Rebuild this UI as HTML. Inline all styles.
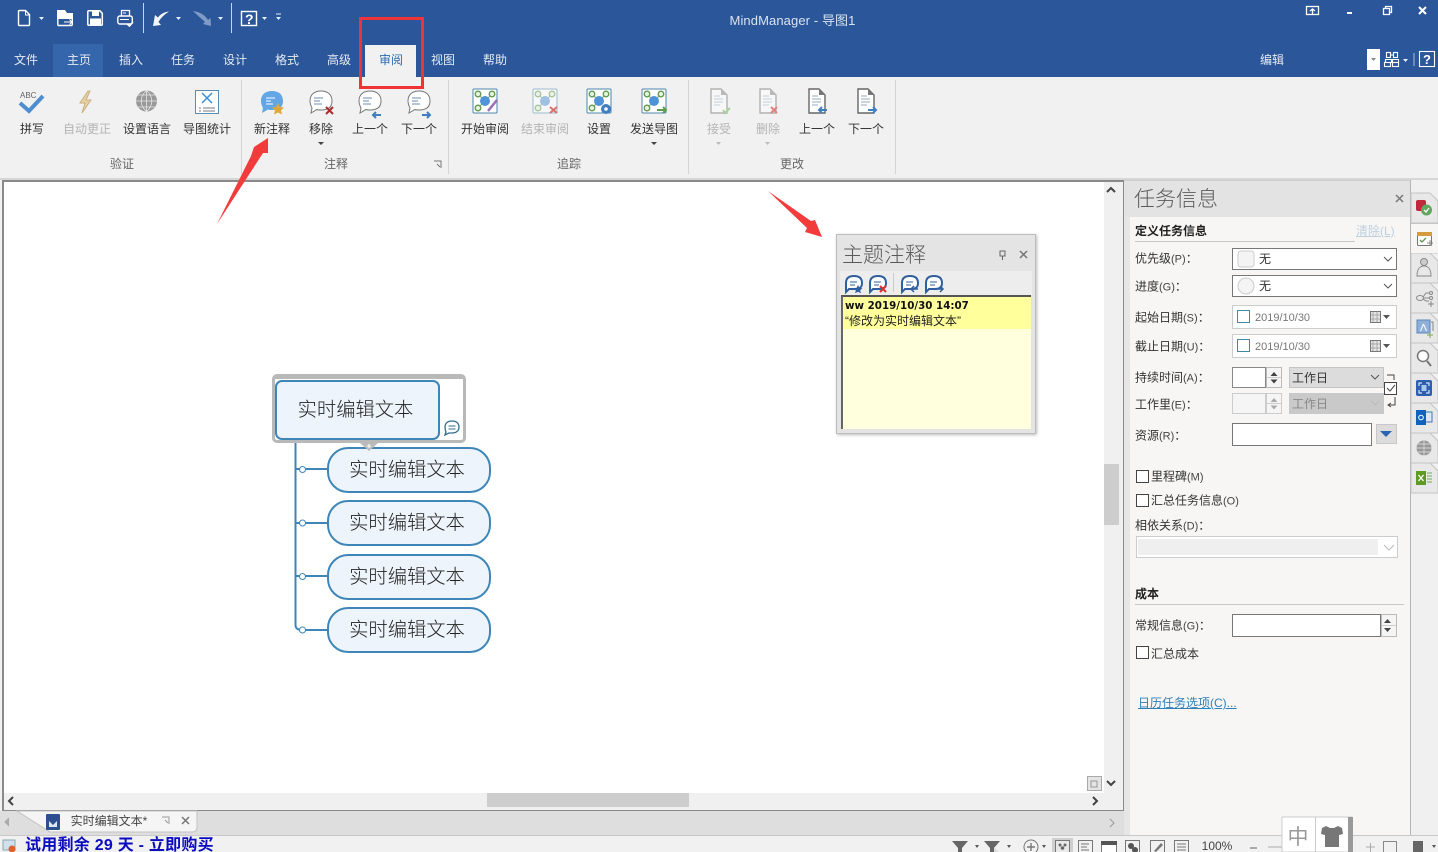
<!DOCTYPE html>
<html><head><meta charset="utf-8"><style>
html,body{margin:0;padding:0;width:1438px;height:852px;overflow:hidden;background:#f1f1f1}
body{position:relative;font-family:"Liberation Sans","Noto Sans CJK SC",sans-serif;font-size:12px;color:#333}
.b{position:absolute;box-sizing:border-box}
.t{position:absolute;white-space:nowrap;line-height:16px;transform:translate(-50%,-50%);z-index:2}
.l{position:absolute;white-space:nowrap;line-height:16px;transform:translateY(-50%);z-index:2}
.tab{color:#e4eaf4}.dis{color:#b4b4b4}.grp{color:#666}
.topic{position:absolute;box-sizing:border-box;background:#eef4fb;border:2px solid #3f86b8;left:327px;width:164px;height:46px;border-radius:21px;font-size:19.3px;font-weight:300;line-height:44px;text-align:center;color:#222;padding-right:4px}
.lab{color:#333}.lab small{font-size:11px;color:#444}
svg{position:absolute;left:0;top:0}
</style></head><body>
<div class="b" style="left:0;top:0;width:1438px;height:77px;background:#2b579a"></div>
<div class="b" style="left:53px;top:44px;width:50px;height:33px;background:#3565ab"></div>
<div class="b" style="left:365px;top:45px;width:51px;height:32px;background:#f1f1f1"></div>
<div class="b" style="left:1367px;top:49px;width:13px;height:21px;background:#fff"></div>
<div class="t" style="left:792.500px;top:21px;color:#d9e2f0;font-size:13px;letter-spacing:.1px">MindManager - 导图1</div>
<div class="t tab" style="left:26px;top:60px">文件</div><div class="t tab" style="left:79px;top:60px">主页</div><div class="t tab" style="left:131px;top:60px">插入</div><div class="t tab" style="left:183px;top:60px">任务</div><div class="t tab" style="left:235px;top:60px">设计</div><div class="t tab" style="left:287px;top:60px">格式</div><div class="t tab" style="left:339px;top:60px">高级</div><div class="t" style="left:391px;top:60px;color:#2b6cb0">审阅</div><div class="t tab" style="left:443px;top:60px">视图</div><div class="t tab" style="left:495px;top:60px">帮助</div><div class="t tab" style="left:1272px;top:60px">编辑</div>

<div class="t" style="left:32px;top:128.500px">拼写</div><div class="t dis" style="left:87px;top:128.500px">自动更正</div><div class="t" style="left:147px;top:128.500px">设置语言</div><div class="t" style="left:207px;top:128.500px">导图统计</div><div class="t" style="left:272px;top:128.500px">新注释</div><div class="t" style="left:321px;top:128.500px">移除</div><div class="t" style="left:370px;top:128.500px">上一个</div><div class="t" style="left:419px;top:128.500px">下一个</div><div class="t" style="left:485px;top:128.500px">开始审阅</div><div class="t dis" style="left:545px;top:128.500px">结束审阅</div><div class="t" style="left:599px;top:128.500px">设置</div><div class="t" style="left:654px;top:128.500px">发送导图</div><div class="t dis" style="left:719px;top:128.500px">接受</div><div class="t dis" style="left:768px;top:128.500px">删除</div><div class="t" style="left:817px;top:128.500px">上一个</div><div class="t" style="left:866px;top:128.500px">下一个</div>
<div class="t grp" style="left:122px;top:164px">验证</div><div class="t grp" style="left:336px;top:164px">注释</div><div class="t grp" style="left:569px;top:164px">追踪</div><div class="t grp" style="left:792px;top:164px">更改</div>

<div class="b" style="left:0;top:178px;width:1438px;height:2px;background:#d6d6d6"></div>
<div class="b" style="left:2px;top:180px;width:1122px;height:631px;background:#fff;border:2px solid #8a8a8a;border-width:2px 1px 1px 2px"></div>
<div class="b" style="left:1104px;top:182px;width:19px;height:628px;background:#f0f0f0"></div>
<div class="b" style="left:4px;top:793px;width:1119px;height:17px;background:#f0f0f0"></div>
<div class="b" style="left:1104px;top:464px;width:15px;height:61px;background:#cdcdcd"></div>
<div class="b" style="left:487px;top:793px;width:202px;height:14px;background:#cdcdcd"></div>
<div class="b" style="left:0;top:811px;width:1124px;height:24px;background:#dedede"></div>
<div class="b" style="left:1124px;top:180px;width:6px;height:655px;background:#e6e6e6"></div>
<div class="b" style="left:1130px;top:180px;width:280px;height:655px;background:#f7f6f5"></div>
<div class="b" style="left:1124px;top:180px;width:286px;height:37px;background:#e3e3e3;border-top:1px solid #ccc"></div>
<div class="b" style="left:1410px;top:180px;width:28px;height:655px;background:#f0f0f0;border-left:1px solid #b5b5b5"></div>
<div class="b" style="left:0;top:835px;width:1438px;height:17px;background:#f1f1f1;border-top:1px solid #c8c8c8"></div>

<div class="l" style="left:1134px;top:200px;font-size:21px;line-height:26px;color:#5a5a5a;font-weight:300">任务信息</div>
<div class="l" style="left:1135px;top:231px;font-weight:bold;color:#222">定义任务信息</div>
<div class="l" style="left:1356px;top:231px;color:#bfd0dd;text-decoration:underline">清除(L)</div>
<div class="b" style="left:1135px;top:241px;width:220px;height:1px;background:#c8c8c8"></div>
<div class="l lab" style="left:1135px;top:259px">优先级<small>(P)</small>：</div>
<div class="l lab" style="left:1135px;top:287px">进度<small>(G)</small>：</div>
<div class="l lab" style="left:1135px;top:318px">起始日期<small>(S)</small>：</div>
<div class="l lab" style="left:1135px;top:347px">截止日期<small>(U)</small>：</div>
<div class="l lab" style="left:1135px;top:378px">持续时间<small>(A)</small>：</div>
<div class="l lab" style="left:1135px;top:405px">工作里<small>(E)</small>：</div>
<div class="l lab" style="left:1135px;top:436px">资源<small>(R)</small>：</div>
<div class="l lab" style="left:1151px;top:477px">里程碑<small>(M)</small></div>
<div class="l lab" style="left:1151px;top:501px">汇总任务信息<small>(O)</small></div>
<div class="l lab" style="left:1135px;top:526px">相依关系<small>(D)</small>：</div>
<div class="l" style="left:1135px;top:594px;font-weight:bold;color:#222">成本</div>
<div class="b" style="left:1135px;top:604px;width:269px;height:1px;background:#c8c8c8"></div>
<div class="l lab" style="left:1135px;top:626px">常规信息<small>(G)</small>：</div>
<div class="l lab" style="left:1151px;top:654px">汇总成本</div>
<div class="l" style="left:1138px;top:703px;color:#2f80b8;text-decoration:underline">日历任务选项(C)...</div>

<div class="b" style="left:1232px;top:248px;width:165px;height:22px;background:#fff;border:1px solid #777"></div>
<div class="b" style="left:1232px;top:275px;width:165px;height:22px;background:#fff;border:1px solid #777"></div>
<div class="l" style="left:1259px;top:259px">无</div><div class="l" style="left:1259px;top:286px">无</div>
<div class="b" style="left:1232px;top:305px;width:165px;height:24px;background:#fff;border:1px solid #ccc"></div>
<div class="b" style="left:1232px;top:334px;width:165px;height:24px;background:#fff;border:1px solid #ccc"></div>
<div class="l" style="left:1255px;top:318px;color:#777;font-size:11px">2019/10/30</div>
<div class="l" style="left:1255px;top:347px;color:#777;font-size:11px">2019/10/30</div>
<div class="b" style="left:1232px;top:367px;width:34px;height:21px;background:#fff;border:1px solid #888"></div>
<div class="b" style="left:1266px;top:367px;width:16px;height:21px;background:#f5f5f5;border:1px solid #bbb"></div>
<div class="b" style="left:1289px;top:367px;width:95px;height:21px;background:#dcdcdc;border:1px solid #c4c4c4"></div>
<div class="l" style="left:1292px;top:378px">工作日</div>
<div class="b" style="left:1232px;top:393px;width:34px;height:21px;background:#f5f5f5;border:1px solid #ccc"></div>
<div class="b" style="left:1266px;top:393px;width:16px;height:21px;background:#f5f5f5;border:1px solid #ccc"></div>
<div class="b" style="left:1289px;top:393px;width:95px;height:21px;background:#c9c9c9"></div>
<div class="l" style="left:1292px;top:404px;color:#888">工作日</div>
<div class="b" style="left:1232px;top:423px;width:140px;height:23px;background:#fff;border:1px solid #777"></div>
<div class="b" style="left:1376px;top:424px;width:21px;height:20px;background:#dcdcdc;border:1px solid #c8c8c8"></div>
<div class="b" style="left:1136px;top:470px;width:13px;height:13px;background:#fff;border:1px solid #444"></div>
<div class="b" style="left:1136px;top:494px;width:13px;height:13px;background:#fff;border:1px solid #444"></div>
<div class="b" style="left:1136px;top:536px;width:262px;height:22px;background:#fff;border:1px solid #ccc"></div>
<div class="b" style="left:1138px;top:539px;width:240px;height:16px;background:#efefef"></div>
<div class="b" style="left:1232px;top:614px;width:149px;height:23px;background:#fff;border:1px solid #777"></div>
<div class="b" style="left:1381px;top:614px;width:16px;height:23px;background:#f5f5f5;border:1px solid #bbb"></div>
<div class="b" style="left:1136px;top:646px;width:13px;height:13px;background:#fff;border:1px solid #444"></div>

<!-- mind map -->
<div class="b" style="left:272px;top:374px;width:194px;height:69px;background:#fff;border:3px solid #b9b9b9;border-top-width:5px;border-radius:5px"></div>
<div class="b" style="left:275px;top:380px;width:165px;height:60px;background:#eef4fb;border:2px solid #3f86b8;border-radius:7px;font-size:19.3px;font-weight:300;line-height:58px;text-align:center;color:#222;padding-right:4px">实时编辑文本</div>
<div class="topic" style="top:447px">实时编辑文本</div>
<div class="topic" style="top:500px">实时编辑文本</div>
<div class="topic" style="top:554px">实时编辑文本</div>
<div class="topic" style="top:607px">实时编辑文本</div>

<!-- note panel -->
<div class="b" style="left:836px;top:234px;width:200px;height:200px;background:#e4e4e4;border:1px solid #bdbdbd;box-shadow:1px 1px 3px #bbb"></div>
<div class="b" style="left:840px;top:271px;width:192px;height:24px;background:#ededed"></div>
<div class="l" style="left:842px;top:256px;font-size:21px;line-height:26px;color:#5a5a5a;font-weight:300">主题注释</div>
<div class="b" style="left:841px;top:295px;width:190px;height:134px;background:#ffffdd;border-top:2px solid #555;border-left:2px solid #666"></div>
<div class="b" style="left:843px;top:297px;width:188px;height:32px;background:#ffff9c"></div>
<div class="l" style="left:845px;top:305.500px;font-family:'DejaVu Sans',sans-serif;font-weight:bold;font-size:10.3px;color:#111">ww 2019/10/30 14:07</div>
<div class="l" style="left:845px;top:320.500px;color:#222">“修改为实时编辑文本”</div>

<!-- tab bar -->
<div class="t" style="left:109px;top:821px;color:#444">实时编辑文本*</div>
<div class="l" style="left:25px;top:846px;font-size:16px;font-weight:bold;color:#0b0bbf;letter-spacing:.25px">试用剩余 29 天 - 立即购买</div>
<div class="t" style="left:1217px;top:846px;color:#444">100%</div>

<svg width="1438" height="852" viewBox="0 0 1438 852" fill="none">
<defs>
<g id="bub"><path d="M-11 -1c0-7 5-10 11-10s11 3 11 10-5 9-11 9c-1 0-3 0-4-.5L-10 11l1-5c-1-2-2-4-2-7z"/></g>
<g id="lines"><path d="M-6 -4h9M-6 -1h6M-6 2h8" stroke="#6b8fae"/></g>
<g id="rev"><rect x="-12" y="-12" width="24" height="24" rx="1" fill="#fff" stroke="#4b86ad"/><path d="M-7 -7l7 7M7 -7l-7 7M-7 7l7-7" stroke="#7ba668"/><circle cx="-7" cy="-7" r="2.800" fill="#e6f1df" stroke="#5f9a4c" stroke-width="1.300"/><circle cx="7" cy="-7" r="2.800" fill="#e6f1df" stroke="#5f9a4c" stroke-width="1.300"/><circle cx="-7" cy="7" r="2.800" fill="#e6f1df" stroke="#5f9a4c" stroke-width="1.300"/><circle cx="0" cy="0" r="5" fill="#4f93d8"/></g>
<g id="doc"><path d="M-8 -12h10l6 6v18H-8z" fill="#fff" stroke="#666" stroke-width="1.4"/><path d="M2 -12l6 6H2z" fill="#777"/><path d="M-5 -5h6M-5 -2h9M-5 1h9M-5 4h6" stroke="#9ab"/></g>
<g id="mb"><path d="M-8 0c0-5 3-7 8-7s8 2 8 7-3 6-8 6h-5l-3 3z" fill="#fff" stroke="#2f5f9f" stroke-width="2"/><path d="M-4 -1h7M-4 2h5" stroke="#2f5f9f"/></g>
</defs>
<!-- quick access -->
<path d="M18.500 11.500a1 1 0 0 1 1-1h6l4 4v10a1 1 0 0 1-1 1h-9a1 1 0 0 1-1-1z" stroke="#fff" stroke-width="1.400"/><path d="M25.500 11v4h4" stroke="#fff"/>
<path d="M57 10h8l2 3h6v6H57z" fill="#fff"/><rect x="57.800" y="18" width="14.500" height="7.500" rx="1" stroke="#fff" stroke-width="1.400"/><path d="M64 22h8M69.500 19.500l2.500 2.500-2.500 2.500" stroke="#fff"/>
<path d="M87.800 11.800a1 1 0 0 1 1-1h11l2.500 2.500v11a1 1 0 0 1-1 1h-12.500a1 1 0 0 1-1-1z" stroke="#fff" stroke-width="1.500"/><rect x="92" y="11" width="7" height="5" fill="#fff"/><rect x="90" y="18.500" width="11" height="6.500" fill="#fff"/>
<path d="M121.500 16v-5.500h8v5.500" stroke="#fff" stroke-width="1.300"/><rect x="117.800" y="16" width="14.500" height="8" rx="2" stroke="#fff" stroke-width="1.400"/><path d="M120 19.500h9M123 13h3" stroke="#fff"/><path d="M127 24l2.500 2 3.500-4" stroke="#fff" stroke-width="1.600"/>
<path d="M169 11.500c-5 .5-8.500 2.500-11 6l-3-2.500-2 11 8-1-2.500-3c2-3.500 5-7 10.500-10.500z" fill="#f2f5fa"/>
<path d="M193 11c7 1 12 4 15 9l2.500-2 .5 8-8-2 2-2c-3-3-7-6-12-11z" fill="#7f9cc6"/>
<rect x="241.500" y="11.500" width="15" height="14" stroke="#fff" stroke-width="1.400"/>
<path d="M39 17h5l-2.500 3zM176 17h5l-2.500 3zM218 17h5l-2.500 3zM262 17h5l-2.500 3zM276 17h5l-2.500 3zM1403 59h5l-2.500 3z" fill="#e8eef6"/>
<path d="M276 14h5" stroke="#e8eef6"/>
<path d="M143.500 3v30M231.500 3v30" stroke="#c9d5e6"/>
<text x="245" y="24" font-family="Liberation Sans" font-weight="bold" font-size="14" fill="#fff">?</text>
<!-- window controls -->
<g stroke="#fff" stroke-width="1.300"><rect x="1306.500" y="6.500" width="12" height="8"/><path d="M1312.500 14V9M1310 11l2.500-2 2.500 2"/><path d="M1347 13h5" stroke-width="2"/><path d="M1383.500 8.500h6v6h-6zM1385.500 8.500v-2h6v6h-2"/><path d="M1419 7l7 7M1426 7l-7 7" stroke-width="2"/></g>
<g stroke="#fff" stroke-width="1.100"><rect x="1386.500" y="52.500" width="4" height="5"/><rect x="1393.500" y="52.500" width="4" height="5"/><path d="M1390.500 55h3M1385.500 59.500h6v3h-6zM1392.500 59.500h6v3h-6z"/><rect x="1384.500" y="62.500" width="6" height="4"/><rect x="1392.500" y="62.500" width="6" height="4"/><rect x="1419.500" y="51.500" width="15" height="15"/><path d="M1414 53v13" stroke="#9fb4d3"/></g>
<text x="1423" y="64" font-family="Liberation Sans" font-weight="bold" font-size="13" fill="#fff">?</text>
<path d="M1371 58h5l-2.500 3z" fill="#888"/>
<!-- red rect -->
<rect x="360.500" y="18.500" width="62" height="69" stroke="#ee3434" stroke-width="3"/>
<!-- ribbon separators -->
<path d="M241.500 80v94M448.500 80v94M688.500 80v94M895.500 80v94" stroke="#d4d4d4"/>
<path d="M434 161h7v7M437 164l3 3" stroke="#777"/>
<!-- ribbon icons -->
<path d="M20 103l9 8 14-15" stroke="#4d8ed1" stroke-width="4"/>
<text x="20" y="98" font-family="Liberation Sans" font-size="8" fill="#666">ABC</text>
<path d="M88 91l-8 12h5l-3 10 9-13h-5l4-9z" fill="#e8d2a0" stroke="#c8b080"/>
<circle cx="146.500" cy="101" r="10.500" fill="#999"/><path d="M136 101h21M146.500 90.500v21M138 95h17M138 107h17M146.500 90.500c-7 6-7 15 0 21M146.500 90.500c7 6 7 15 0 21" stroke="#e6e6e6" stroke-width=".8"/>
<rect x="195.500" y="90.500" width="23" height="23" fill="#fff" stroke="#5c8db0"/><path d="M202 93l10 10M212 93l-10 10" stroke="#3b8fd0" stroke-width="1.500"/><path d="M199 108h2M203 108h12M199 111h2M203 111h12" stroke="#778"/>
<use href="#bub" x="272" y="102" fill="#63a6e6"/><path d="M266 98h9M266 101h5M266 104h7" stroke="#fff"/><path d="M278 103l2 4 4 .5-3 3 1 4-4-2-4 2 1-4-3-3 4-.5z" fill="#e0a838"/>
<use href="#bub" x="321" y="102" fill="#fff" stroke="#777"/><use href="#lines" x="320" y="102"/><path d="M326 107l7 7M333 107l-7 7" stroke="#b02a2a" stroke-width="2"/>
<use href="#bub" x="370" y="102" fill="#fff" stroke="#777"/><use href="#lines" x="369" y="102"/><path d="M381 115h-8M376 112l-3 3 3 3" stroke="#3f7fc0" stroke-width="2"/>
<use href="#bub" x="419" y="102" fill="#fff" stroke="#777"/><use href="#lines" x="418" y="102"/><path d="M422 115h8M427 112l3 3-3 3" stroke="#3f7fc0" stroke-width="2"/>
<path d="M318 142h6l-3 3zM651 142h6l-3 3z" fill="#444"/><path d="M716 142h5l-2.500 3zM765 142h5l-2.500 3z" fill="#bbb"/>
<use href="#rev" x="485" y="101"/><path d="M488 111l9-11" stroke="#9a6fb0" stroke-width="2.500"/>
<g opacity=".5"><use href="#rev" x="545" y="101"/></g><path d="M550 107l7 6M557 107l-7 6" stroke="#d9706a" stroke-width="2"/>
<use href="#rev" x="599" y="101"/><circle cx="606" cy="109" r="5" fill="#3f7fc0"/><circle cx="606" cy="109" r="1.800" fill="#fff"/>
<use href="#rev" x="654" y="101"/><path d="M657 110h9M663 107l3 3-3 3" stroke="#5f9d50" stroke-width="2"/>
<g opacity=".45"><use href="#doc" x="719" y="101"/><use href="#doc" x="768" y="101"/></g>
<path d="M723 110l2 3 5-5" stroke="#a9d09a" stroke-width="2"/><path d="M771 107l6 6M777 107l-6 6" stroke="#e0827e" stroke-width="2"/>
<use href="#doc" x="817" y="101"/><path d="M827 110h-8M822 107l-3 3 3 3" stroke="#3f7fc0" stroke-width="2"/>
<use href="#doc" x="866" y="101"/><path d="M868 110h8M873 107l3 3-3 3" stroke="#3f7fc0" stroke-width="2"/>
<!-- arrows -->
<path d="M217 224L251 156 254 147 268 138 268 153 263 153z" fill="#f23c3c"/>
<path d="M768 191L811 221 815 220 822 237 805 232 807 228z" fill="#f23c3c"/>
<!-- mind map lines -->
<path d="M295.500 443V625q0 5 7 5H327M295 469h32M295 523h32M295 576h32" stroke="#3f86b8" stroke-width="2"/>
<g fill="#fff" stroke="#3f86b8"><circle cx="302.500" cy="469.500" r="3"/><circle cx="302.500" cy="523" r="3"/><circle cx="302.500" cy="576.500" r="3"/><circle cx="302.500" cy="630" r="3"/></g>
<path d="M360 443h18l-9 8z" fill="#bbb"/><path d="M367 446h4M369 444v4" stroke="#fff"/>
<path d="M445 427c0-4 3-6 7-6s7 2 7 6-3 6-7 6h-3l-4 2 1-3c-1-2-1-3-1-5z" fill="#fff" stroke="#2f6f8f" stroke-width="1.300"/><path d="M448.500 426h7M448.500 429h7" stroke="#2f6f8f"/>
<!-- scroll arrows -->
<path d="M1107 192l4-4 4 4M1107 781l4 4 4-4M13 797l-4 4 4 4M1093 797l4 4-4 4" stroke="#444" stroke-width="2"/>
<rect x="1087.500" y="776.500" width="14" height="14" fill="#e4e4e4" stroke="#aaa"/><path d="M1091 781h6v6h-6z" stroke="#999"/>
<!-- note toolbar -->
<use href="#mb" x="854" y="283"/><path d="M858 285l1.500 3 3 .3-2.300 2 .7 3-2.900-1.600-2.900 1.600.7-3-2.300-2 3-.3z" fill="#2f5f9f"/>
<use href="#mb" x="878" y="283"/><path d="M880 286l6 6M886 286l-6 6" stroke="#d63232" stroke-width="2"/>
<path d="M893.500 273v19" stroke="#ccc"/>
<use href="#mb" x="910" y="283"/><path d="M918 289h-6M914 286l-3 3 3 3" stroke="#2f5f9f" stroke-width="1.500"/>
<use href="#mb" x="934" y="283"/><path d="M936 289h6M940 286l3 3-3 3" stroke="#2f5f9f" stroke-width="1.500"/>
<path d="M1000 251h5v5h-5zM999.500 256h6M1002.500 256v4" stroke="#666"/>
<path d="M1020 251l7 7M1027 251l-7 7" stroke="#777" stroke-width="1.500"/>
<path d="M1396 195l7 7M1403 195l-7 7" stroke="#777" stroke-width="1.500"/>
<!-- right panel details -->
<rect x="1238" y="251" width="16" height="16" rx="3" fill="#f4f4f4" stroke="#ccc"/>
<circle cx="1246" cy="286" r="8" fill="#f4f4f4" stroke="#ccc"/>
<path d="M1384 257l4 4 4-4M1384 284l4 4 4-4M1371 375l4 4 4-4" stroke="#555"/>
<path d="M1371 401l4 4 4-4M1384 545l5 5 5-5" stroke="#bbb"/>
<rect x="1237.500" y="310.500" width="12" height="12" stroke="#3d8ba5"/><rect x="1237.500" y="339.500" width="12" height="12" stroke="#3d8ba5"/>
<g fill="#e4e4e4" stroke="#777"><rect x="1370.500" y="311.500" width="10" height="11"/><rect x="1370.500" y="340.500" width="10" height="11"/></g>
<path d="M1373 312v10M1377 312v10M1371 315h9M1371 319h9M1373 341v10M1377 341v10M1371 344h9M1371 348h9" stroke="#aaa"/>
<path d="M1383 315h7l-3.500 4zM1383 344h7l-3.500 4z" fill="#555"/>
<path d="M1267 377.500h14M1267 403.500h14M1382 625.500h14" stroke="#ccc"/>
<path d="M1270.500 376h7l-3.500-4zM1270.500 379.500h7l-3.500 4z" fill="#444"/><path d="M1270.500 402h7l-3.500-4zM1270.500 405.500h7l-3.500 4z" fill="#aaa"/>
<path d="M1384 623h7l-3.500-4zM1384 628h7l-3.500 4z" fill="#444"/>
<path d="M1380 431h12l-6 6z" fill="#2b64b0"/>
<path d="M1387 375h7v5M1395 397v8h-6M1391 403l-3 2 3 2" stroke="#444"/>
<rect x="1384.500" y="382.500" width="12" height="12" fill="#fff" stroke="#444"/><path d="M1387 388l3 3 5-6" stroke="#444"/>
<!-- right rail tabs -->
<path d="M1411 224h27v-1M1411 253h27" stroke="#c4c4c4"/>
<g fill="#e8e8e8" stroke="#c4c4c4"><path d="M1411 193h19l8 8v22h-27zM1411 253h19l8 8v22h-27zM1411 283h19l8 8v22h-27zM1411 313h19l8 8v22h-27zM1411 343h19l8 8v22h-27zM1411 373h19l8 8v22h-27zM1411 403h19l8 8v22h-27zM1411 433h19l8 8v22h-27zM1411 463h19l8 8v22h-27z"/></g>
<path d="M1411 224h27v29h-27z" fill="#f7f6f5"/>
<rect x="1416" y="200" width="10" height="11" rx="2" fill="#c0283c"/><circle cx="1426.500" cy="210" r="5.500" fill="#62a55c"/><path d="M1424 210l2 2 3-4" stroke="#fff" stroke-width="1.300"/>
<rect x="1417.500" y="232.500" width="14" height="13" rx="1" fill="#fff" stroke="#777"/><path d="M1417 232h15v4h-15z" fill="#d49b3f"/><path d="M1420 240l2 2 4-4" stroke="#5a9a50" stroke-width="1.300"/><path d="M1427 243h6M1430 240v6" stroke="#888"/>
<circle cx="1424" cy="262" r="3.500" fill="#ccc" stroke="#888"/><path d="M1417 276c0-7 3-10 7-10s7 3 7 10z" stroke="#888"/>
<ellipse cx="1420" cy="298" rx="3.500" ry="2.500" stroke="#888"/><path d="M1423 297l3-4h4M1423.500 298h6M1423 299l3 2h3" stroke="#888"/><circle cx="1431" cy="293" r="1.500" stroke="#888"/><circle cx="1431" cy="298" r="1.500" stroke="#888"/><path d="M1428 304h6M1431 301v6" stroke="#888"/>
<rect x="1417" y="320" width="13" height="13" fill="#8fb0d8" stroke="#5f86b8"/><path d="M1431 322h2v9" stroke="#888"/><path d="M1423.500 324l-3 7M1423.500 324l3 7" stroke="#fff"/><path d="M1427 335h6M1430 332v6" stroke="#7aa85a"/>
<circle cx="1423" cy="356" r="5.500" fill="#fff" stroke="#777" stroke-width="1.500"/><path d="M1427 361l4 5" stroke="#777" stroke-width="2"/>
<rect x="1416" y="380" width="16" height="16" rx="2" fill="#2c5fb0"/><path d="M1419 386v-3h3M1426 383h3v3M1429 390v3h-3M1422 393h-3v-3" stroke="#fff"/><rect x="1421.500" y="385" width="5" height="6" fill="#a8c8ea"/>
<rect x="1421" y="412" width="11" height="10" fill="#dce8f6" stroke="#3a78c0"/><rect x="1416" y="410" width="10" height="15" fill="#0f63bd"/><circle cx="1421" cy="417.500" r="2.300" stroke="#fff"/>
<circle cx="1424" cy="448" r="7.500" fill="#999"/><path d="M1416.500 448h15M1424 440.500v15M1418 444h12M1418 452h12" stroke="#e6e6e6" stroke-width=".7"/>
<rect x="1416" y="471" width="10" height="14" fill="#5f9b22"/><path d="M1427 473h5M1427 476h5M1427 479h5M1427 482h5" stroke="#7ca85a"/><path d="M1418.500 475l5 6M1423.500 475l-5 6" stroke="#fff" stroke-width="1.300"/>
<!-- tab bar -->
<path d="M17 811h180v16q0 5-5 5H50z" fill="#f5f5f5" stroke="#c2c2c2"/>
<path d="M9 818l-4 4 4 4" stroke="#aaa" fill="#aaa"/>
<path d="M1110 819l4 4-4 4" stroke="#999"/>
<rect x="46" y="814" width="14" height="16" rx="1" fill="#2c4f90"/><path d="M49 827v-6l4 4 4-4v6" fill="#dce6f4"/>
<path d="M162 817h7v7M165 820l3 3" stroke="#999"/><path d="M182 817l7 7M189 817l-7 7" stroke="#777" stroke-width="1.500"/>
<!-- status -->
<rect x="3" y="840" width="12" height="10" fill="#cfe0ef" stroke="#8aa"/><circle cx="12" cy="849" r="3.500" fill="#e06030"/>
<rect x="1052" y="838" width="21" height="14" fill="#cfcfcf"/>
<g fill="#666"><path d="M952 841h16l-6 7v4h-4v-4z"/><path d="M984 841h16l-6 7v4h-4v-4z"/></g>
<path d="M994 847l5 5h-5z" fill="#ddd"/>
<g stroke="#777"><circle cx="1031" cy="847" r="7"/><path d="M1027 847h8M1031 843v8" stroke-width="1.400"/><rect x="1055.500" y="840.500" width="14" height="12" fill="#e8e8e8"/><rect x="1078.500" y="840.500" width="14" height="12"/><path d="M1081 844h8M1081 847h6M1081 850h8"/><rect x="1101.500" y="841.500" width="15" height="11" fill="#fff"/><rect x="1125.500" y="840.500" width="14" height="12"/><rect x="1150.500" y="840.500" width="14" height="12"/><rect x="1174.500" y="840.500" width="14" height="12"/><path d="M1177 844h9M1177 847h9M1177 850h9"/><path d="M1250 848h7" stroke-width="2" stroke="#aaa"/><path d="M1268 847h14M1366 847h9M1370.500 843v9" stroke="#aaa"/><rect x="1383.500" y="841.500" width="13" height="11" stroke="#888"/></g>
<rect x="1101" y="841" width="16" height="4" fill="#555"/><circle cx="1060" cy="845" r="1.500" fill="#666"/><circle cx="1065" cy="845" r="1.500" fill="#666"/><circle cx="1062.500" cy="848" r="1.800" fill="#666"/>
<circle cx="1131" cy="846" r="3" fill="#555"/><circle cx="1135" cy="850" r="3" fill="#555"/><path d="M1154 851l7-8 2 2-7 7z" fill="#777"/>
<rect x="1413" y="841" width="10" height="11" fill="#666"/>
<path d="M975 845h4l-2 3zM1007 845h4l-2 3zM1042 845h4l-2 3zM1432 845h4l-2 3z" fill="#555"/>
<!-- IME widget -->
<rect x="1282" y="817" width="70" height="35" fill="#fff" stroke="#ccc"/><rect x="1348" y="817" width="5" height="35" fill="#9a9a9a"/><path d="M1315.500 817v35" stroke="#ccc"/>
<path d="M1322 828l4-2 4 2h4l4-2 4 2 1 6-4 1v12h-14v-12l-4-1z" fill="#777"/>
<text x="1298" y="844" text-anchor="middle" font-family="Noto Sans CJK SC" font-size="21" fill="#999">中</text>
</svg>
</body></html>
